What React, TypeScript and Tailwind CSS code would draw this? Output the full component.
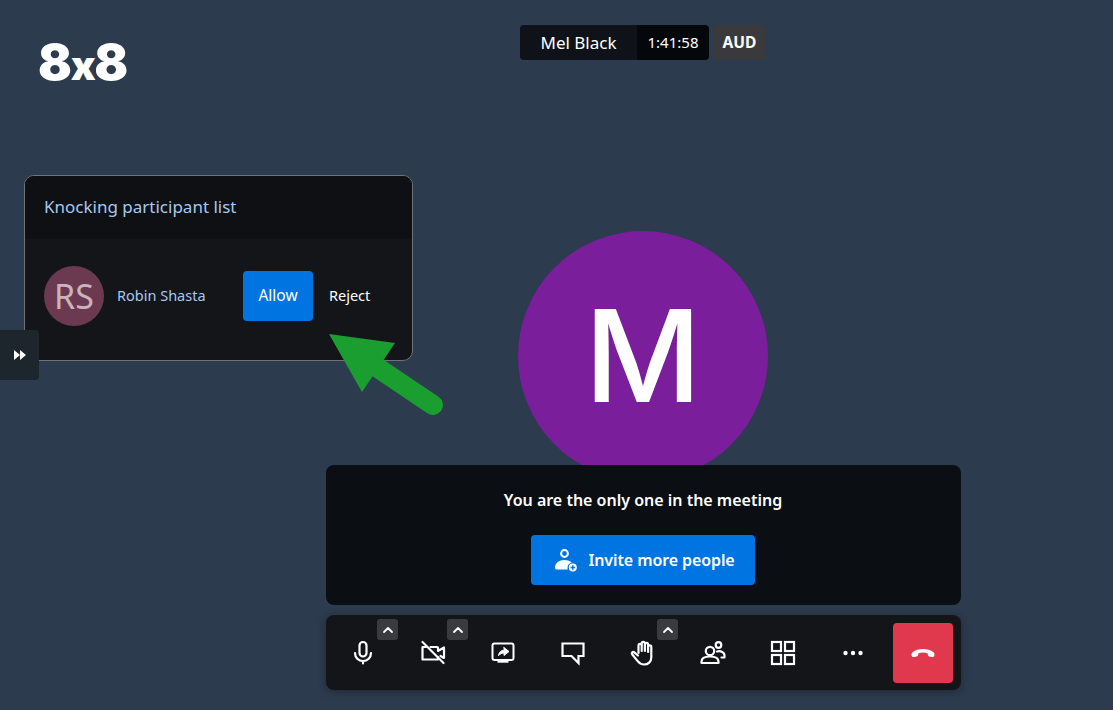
import { ReactNode } from "react"

const ToolButton = ({ children, chevron }: { children: ReactNode; chevron?: boolean }) => (
  <div className="relative flex h-full w-[70px] items-center justify-center">
    {children}
    {chevron && (
      <div className="absolute right-0 top-[4px] flex h-[21px] w-[21px] items-center justify-center rounded-[3px] bg-[#3a3b3f]">
        <svg width="12" height="12" viewBox="0 0 12 12" fill="none" stroke="#fff" strokeWidth="1.8" strokeLinecap="round" strokeLinejoin="round">
          <path d="M2 8l4-4 4 4" />
        </svg>
      </div>
    )}
  </div>
)

const iconProps = {
  width: 28,
  height: 28,
  viewBox: "0 0 28 28",
  fill: "none",
  stroke: "#fff",
  strokeWidth: 2.2,
  strokeLinecap: "round" as const,
  strokeLinejoin: "round" as const,
}

const MicIcon = () => (
  <svg {...iconProps}>
    <rect x="10.5" y="3" width="7" height="14.500" rx="3.5" />
    <path d="M6 14c0 4.700 3.500 8 8 8s8-3.300 8-8M14 22v2.500" />
  </svg>
)

const CameraOffIcon = () => (
  <svg {...iconProps}>
    <path d="M7 8H3.500v12.500h15.500v-2.500M11.500 8H18c.6 0 1 .4 1 1v3l6-3.500v10.500l-3.500-2" />
    <path d="M3.500 3l21 21" />
  </svg>
)

const ShareIcon = () => (
  <svg {...iconProps}>
    <rect x="3.500" y="4.500" width="21" height="16.500" rx="2" strokeWidth="2" />
    <path d="M8.500 22.500h11" strokeWidth="2.400" strokeLinecap="butt" />
    <path d="M15 8.500l5 4-5 4v-2.400c-2.300 0-4 .8-5.500 2.600.4-3.200 2.200-5.300 5.500-5.800z" fill="#fff" strokeWidth="1" />
  </svg>
)

const ChatIcon = () => (
  <svg {...iconProps}>
    <path d="M3.500 4.500h21V17h-5v7l-7-7H3.500z" strokeLinejoin="miter" />
  </svg>
)

const HandIcon = () => (
  <svg {...iconProps}>
    <path d="M9.500 14V6.500a1.600 1.600 0 0 1 3.200 0V12M12.700 12V4.500a1.600 1.600 0 0 1 3.200 0V12M15.900 12V5.500a1.600 1.600 0 0 1 3.200 0V13M19.100 13V8a1.600 1.600 0 0 1 3.200 0v10.500c0 4.200-3.200 7-7.200 7-3.200 0-5-1.400-6.600-3.600l-5.400-6.600c-1-1.400.8-3 2.200-1.900l3.700 3.100" />
  </svg>
)

const PeopleIcon = () => (
  <svg {...iconProps}>
    <circle cx="11" cy="12" r="4.200" />
    <path d="M2.500 24v-1.300c0-3.300 3.300-5.200 8.500-5.200s8.500 1.900 8.500 5.200V24z" />
    <circle cx="19.500" cy="6" r="2.800" />
    <path d="M18 12.500c4-1 7.500.8 7.500 3.800v2.200h-3" />
  </svg>
)

const GridIcon = () => (
  <svg {...iconProps} strokeLinecap="butt" strokeLinejoin="miter" strokeWidth="2.200">
    <rect x="3" y="3" width="9" height="9" />
    <rect x="16" y="3" width="9" height="9" />
    <rect x="3" y="16" width="9" height="9" />
    <rect x="16" y="16" width="9" height="9" />
  </svg>
)

const MoreIcon = () => (
  <svg width="28" height="28" viewBox="0 0 28 28" fill="#fff">
    <circle cx="6.500" cy="14" r="2.200" />
    <circle cx="14" cy="14" r="2.200" />
    <circle cx="21.500" cy="14" r="2.200" />
  </svg>
)

const HangupIcon = () => (
  <svg width="26" height="26" viewBox="0 0 26 26" fill="#fff">
    <path d="M1.500 14.500c0-1 .3-1.700 1-2.300C5.500 9.800 9 9 13 9s7.500.8 10.500 3.200c.7.600 1 1.300 1 2.300 0 .9-.2 1.700-.6 2.100-.4.400-1 .5-1.700.4l-2.800-.4c-.9-.1-1.400-.6-1.500-1.500l-.2-1.700c-1.300-.5-2.800-.8-4.700-.8s-3.400.3-4.700.8l-.2 1.700c-.1.900-.6 1.400-1.500 1.500l-2.800.4c-.7.100-1.300 0-1.700-.4-.4-.4-.6-1.200-.6-2.100z" />
  </svg>
)

const InviteIcon = () => (
  <svg width="26" height="26" viewBox="0 0 26 26" fill="none">
    <circle cx="11.500" cy="6.500" r="3.400" stroke="#fff" strokeWidth="2" />
    <path d="M2 20.500c0-4.500 4-7.500 9.500-7.500 3 0 5.600.9 7.300 2.400-2.400.5-4.300 2.700-4.300 5.300 0 .7.100 1.300.3 1.800H3.500c-.9 0-1.500-.7-1.500-2z" fill="#fff" />
    <circle cx="19.800" cy="20.500" r="4" fill="#fff" />
    <path d="M19.800 18.300v4.400M17.600 20.500h4.400" stroke="#0074e0" strokeWidth="1.500" />
  </svg>
)

const App = () => {
  return (
    <div className="relative h-[710px] w-[1113px] overflow-hidden bg-[#2c3b4d] font-['Noto_Sans','Open_Sans',sans-serif]">
      {/* logo */}
      <div className="absolute left-[38px] top-[30px] font-['Inter',sans-serif] text-[50px] font-black leading-[64px] tracking-[-1.300px] text-white">
        8<span className="text-[41px]">x</span>8
      </div>

      {/* knocking panel */}
      <div className="absolute left-[24px] top-[175px] w-[389px] overflow-hidden rounded-[10px] border border-[#6f7276] bg-[#141519]">
        <div className="flex h-[63px] items-center bg-[#0e1014] pb-[2px] pl-[19px] text-[17px] text-[#a7c8ee]">Knocking participant list</div>
        <div className="flex h-[121px] items-start pl-[19px] pt-[27px]">
          <div className="flex h-[60px] w-[60px] items-center justify-center rounded-full bg-[#6b3a50] text-[34px] text-[#c9b4be]">RS</div>
          <div className="ml-[13px] mt-[19px] w-[126px] text-[14.5px] leading-[20px] text-[#a7c8ee]">Robin Shasta</div>
          <div className="mt-[5px] flex h-[50px] w-[70px] items-center justify-center rounded-[4px] bg-[#0074e0] text-[15.5px] text-white">Allow</div>
          <div className="ml-[16px] mt-[19px] text-[14.5px] leading-[20px] text-white">Reject</div>
        </div>
      </div>

      {/* side toggle */}
      <div className="absolute left-0 top-[330px] flex h-[50px] w-[39px] items-center justify-center rounded-r-[4px] bg-[#1d252d]">
        <svg width="14" height="12" viewBox="0 0 14 12" fill="#fff">
          <path d="M1 1l6 5-6 5zM7 1l6 5-6 5z" />
        </svg>
      </div>

      {/* center column */}
      <div className="ml-[326px] flex w-[634px] flex-col items-center pt-[25px]">
        <div className="flex h-[35px] items-stretch">
          <div className="flex w-[117px] items-center justify-center rounded-l-[4px] bg-[#0f1319] text-[17px] text-white">Mel Black</div>
          <div className="flex w-[72px] items-center justify-center rounded-r-[4px] bg-[#05080b] text-[15px] text-white">1:41:58</div>
          <div className="ml-[4px] flex w-[53px] items-center justify-center rounded-[4px] bg-[#3a3a3d] text-[15.5px] font-bold text-white">AUD</div>
        </div>

        <div className="mt-[171px] flex h-[250px] w-[250px] items-center justify-center rounded-full bg-[#7a1e9c] font-['Inter',sans-serif] text-[128px] font-medium text-white">
          <span className="blur-[0.5px]">M</span>
        </div>

        <div className="relative -mt-[16px] flex h-[140px] w-[635px] flex-col items-center self-start rounded-[8px] bg-[#0b0e13] pr-px">
          <div className="mt-[23px] text-[16px] font-semibold leading-[24px] text-white">You are the only one in the meeting</div>
          <div className="mt-[23px] flex h-[50px] w-[224px] items-center justify-center gap-[9px] rounded-[4px] bg-[#0074e0] pl-[2px] text-[16px] font-semibold tracking-[-0.1px] text-white">
            <InviteIcon />
            Invite more people
          </div>
        </div>

        <div className="mt-[10px] flex h-[75px] w-[635px] items-center self-start rounded-[8px] bg-[#141519] px-[2px] shadow-[0_2px_8px_rgba(0,0,0,0.3)]">
          <ToolButton chevron><MicIcon /></ToolButton>
          <ToolButton chevron><CameraOffIcon /></ToolButton>
          <ToolButton><ShareIcon /></ToolButton>
          <ToolButton><ChatIcon /></ToolButton>
          <ToolButton chevron><HandIcon /></ToolButton>
          <ToolButton><PeopleIcon /></ToolButton>
          <ToolButton><GridIcon /></ToolButton>
          <ToolButton><MoreIcon /></ToolButton>
          <ToolButton>
            <div className="flex h-[60px] w-[60px] items-center justify-center rounded-[4px] bg-[#e0394d]">
              <HangupIcon />
            </div>
          </ToolButton>
        </div>
      </div>

      {/* green annotation arrow */}
      <svg className="absolute left-[320px] top-[325px]" width="130" height="100" viewBox="320 325 130 100">
        <path d="M329 334l66 9-33 49z" fill="#1a9e2f" />
        <path d="M378 368l55 37" stroke="#1a9e2f" strokeWidth="20" strokeLinecap="round" />
      </svg>
    </div>
  )
}

export default App
